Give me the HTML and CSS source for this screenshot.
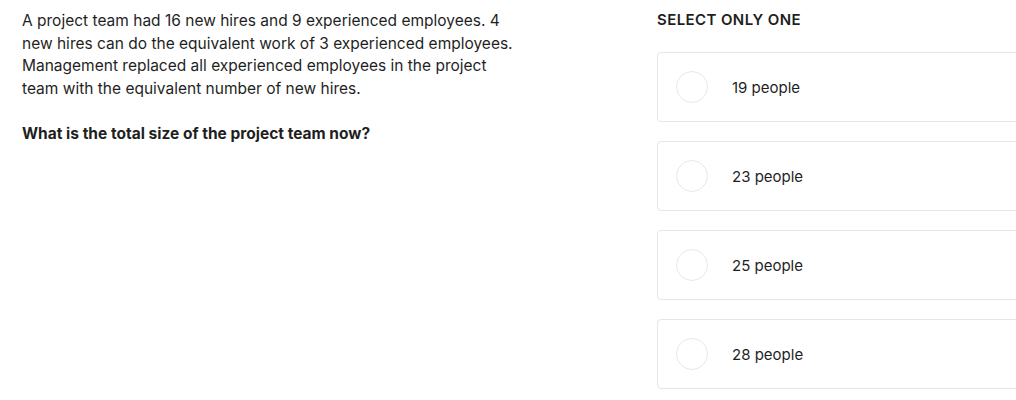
FILE: index.html
```html
<!DOCTYPE html>
<html>
<head>
<meta charset="utf-8">
<link rel="stylesheet" href="styles.css">
</head>
<body>
<div class="page">
  <div class="question">
    <p>A project team had 16 new hires and 9 experienced employees. 4 new hires can do the equivalent work of 3 experienced employees. Management replaced all experienced employees in the project team with the equivalent number of new hires.</p>
    <p class="ask">What is the total size of the project team now?</p>
  </div>
  <div class="answers">
    <div class="label">SELECT ONLY ONE</div>
    <div class="options">
      <div class="option"><span class="radio"></span><span class="text">19 people</span></div>
      <div class="option"><span class="radio"></span><span class="text">23 people</span></div>
      <div class="option"><span class="radio"></span><span class="text">25 people</span></div>
      <div class="option"><span class="radio"></span><span class="text">28 people</span></div>
    </div>
  </div>
</div>
</body>
</html>
```
FILE: styles.css
```css
html, body {
  margin: 0;
  padding: 0;
  background: #ffffff;
  overflow: hidden;
}
body {
  font-family: Inter, "Liberation Sans", Arial, sans-serif;
  color: #1f1f1f;
  width: 1016px;
  height: 400px;
}
.page {
  display: flex;
  padding: 10px 0 0 22px;
}
.question {
  width: 498px;
  flex: none;
  font-size: 15.5px;
  line-height: 22.5px;
}
.question p {
  margin: 0 0 22.5px 0;
}
.question .ask {
  font-weight: 700;
}
.answers {
  margin-left: 137px;
  width: 420px;
  flex: none;
}
.label {
  font-size: 15px;
  font-weight: 600;
  line-height: 20px;
  letter-spacing: 0.4px;
  margin-bottom: 22px;
}
.options {
  display: flex;
  flex-direction: column;
  gap: 19px;
}
.option {
  box-sizing: border-box;
  height: 70px;
  border: 1px solid #e6e6e6;
  border-radius: 4px;
  display: flex;
  align-items: center;
  padding-left: 18px;
}
.radio {
  box-sizing: border-box;
  width: 32px;
  height: 32px;
  border: 1px solid #e8e8e8;
  border-radius: 50%;
  flex: none;
}
.text {
  margin-left: 24px;
  font-size: 15px;
}
```
